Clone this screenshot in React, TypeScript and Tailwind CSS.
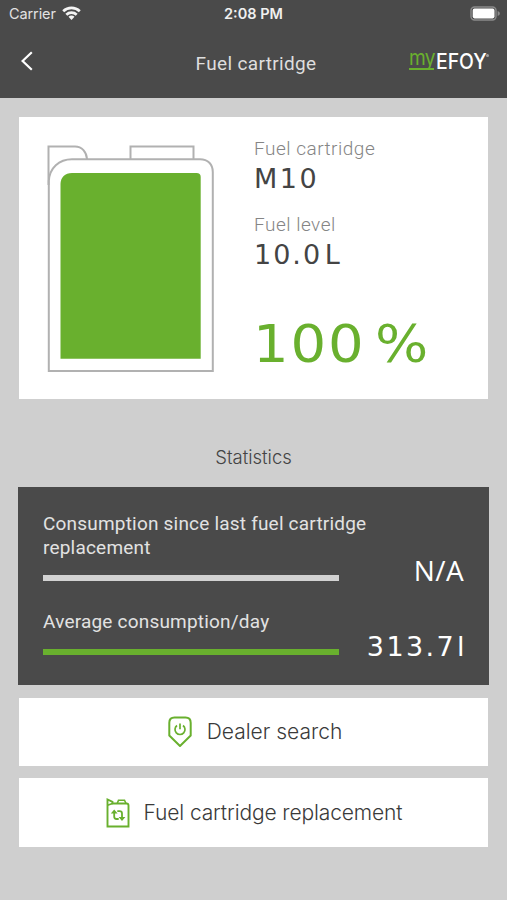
import { ReactNode } from "react";

interface Stat {
  label: string;
  value: string;
  barClass: string;
  textClass: string;
  valueClass: string;
}

const stats: Stat[] = [
  {
    label: "Consumption since last fuel cartridge replacement",
    value: "N/A",
    barClass: "bg-[#d2d2d2]",
    textClass: "h-[47px] mb-[16px]",
    valueClass: "mb-[-9px] font-['Open_Sans'] text-[28px] tracking-[0.4px]",
  },
  {
    label: "Average consumption/day",
    value: "313.7 l",
    barClass: "bg-[#69b02e]",
    textClass: "h-[24px] mb-[15px]",
    valueClass: "mb-[-12px] mr-[-3px] font-['DejaVu_Sans'] text-[27px] tracking-[2.4px] [word-spacing:-10px]",
  },
];

function WifiIcon() {
  return (
    <svg className="w-[19px] h-[15px]" viewBox="0 0 19 15" fill="none" stroke="#f4f4f4" strokeWidth="2.7">
      <path d="M1.2 5.2C5.9 .7 13.1 .7 17.8 5.2" />
      <path d="M4.3 8.7C7.2 5.9 11.8 5.9 14.7 8.7" />
      <path d="M6.5 10.7C8.3 9.2 10.7 9.2 12.5 10.7L9.5 13.9Z" fill="#f4f4f4" stroke="none" />
    </svg>
  );
}

function BatteryIcon() {
  return (
    <svg className="w-[31px] h-[15px]" viewBox="0 0 31 15" fill="none">
      <rect x="1" y="1" width="25" height="13" rx="3.5" stroke="#8b8b8b" strokeWidth="1.4" />
      <rect x="2.7" y="2.6" width="21.8" height="9.8" rx="1.8" fill="#fff" />
      <path d="M27.6 5C30.6 6.2 30.6 8.8 27.6 10Z" fill="#8b8b8b" />
    </svg>
  );
}

function Canister() {
  return (
    <svg className="w-[168px] h-[228px]" viewBox="0 0 168 228" fill="none" stroke="#b1b1b1" strokeWidth="2">
      <path d="M1.5 40V1.5H28C35 1.5 39.5 7 40 14" />
      <path d="M83.5 14V1.5H146.5V14" />
      <path d="M1.8 226V36C2.5 23 12 14.2 25 14.2H153C161 14.2 165.8 19.5 165.8 27V226Z" />
      <path d="M13.5 213.7V39C13.5 32.5 18 28 25 28H149.5C152.3 28 153.7 29.6 153.7 32V213.7Z" fill="#69b02e" stroke="none" />
    </svg>
  );
}

function DealerIcon() {
  return (
    <svg className="w-[24px] h-[32px]" viewBox="0 0 24 32" fill="none" stroke="#69b02e" strokeWidth="2">
      <path d="M6.5 1.5H17.5Q22.7 1.5 22.7 6.8V19.5L12 30L1.3 19.5V6.8Q1.3 1.5 6.5 1.5Z" strokeLinejoin="round" />
      <path d="M9 9.5A5 5 0 1 0 15 9.5M12 7.4V13.3" strokeWidth="1.7" />
    </svg>
  );
}

function ReplaceIcon() {
  return (
    <svg className="w-[24px] h-[30px]" viewBox="0 0 24 30" fill="none" stroke="#69b02e" strokeWidth="1.9">
      <path d="M1.5 28.5V1.5L6.5 3.8V5.5H20.5Q22.5 5.5 22.5 7.5V28.5Z" />
      <path d="M1.5 7.3L6.5 5.5M11.2 5.5L12.5 2.2H18.5L20 5.5" strokeWidth="1.6" />
      <path d="M8.2 13.5V18.5Q8.2 21 10.5 21H12.7M11.3 13.2H13.5Q16 13.2 16 15.5V20.5" strokeWidth="1.8" />
      <path d="M4.8 15.5L8.2 11.5L11.6 15.5ZM12.6 19L16 23L19.4 19Z" fill="#69b02e" stroke="none" />
    </svg>
  );
}

function ActionButton({ icon, children, className }: { icon: ReactNode; children: ReactNode; className: string }) {
  return (
    <button
      className={`flex w-full items-center justify-center bg-white font-[Inter] text-[21px] font-light text-[#3a3a3a] ${className}`}
    >
      {icon}
      <span className="whitespace-nowrap">{children}</span>
    </button>
  );
}

export default function App() {
  return (
    <div className="flex h-[900px] w-[507px] flex-col overflow-hidden bg-[#cfcfcf] font-[Roboto,sans-serif]">
      <header className="h-[98px] shrink-0 bg-[#4a4a4a] text-[#f0f0f0]">
        {/* Status bar */}
        <div className="grid h-[27px] grid-cols-3 items-center pl-[9px] pr-[6px] font-[Inter]">
          <div className="flex items-center gap-[6px]">
            <span className="text-[14.5px] tracking-[-0.1px] text-[#e2e2e2]">Carrier</span>
            <WifiIcon />
          </div>
          <span className="ml-[-3px] text-center text-[14.5px] font-semibold">2:08 PM</span>
          <div className="flex justify-end">
            <BatteryIcon />
          </div>
        </div>

        {/* Title bar */}
        <div className="grid h-[71px] grid-cols-3 items-center pl-[20px] pr-[18px]">
          <svg className="mb-[4px] h-[20px] w-[14px]" viewBox="0 0 14 20" fill="none" stroke="#fff" strokeWidth="2.2">
            <path d="M11.8 1.2L2.6 10L11.8 18.8" />
          </svg>
          <h1 className="ml-[3px] mt-[4px] whitespace-nowrap text-center text-[19px] tracking-[0.35px] text-[#dedede]">
            Fuel cartridge
          </h1>
          <div className="mb-[3px] flex h-[26px] items-center justify-end font-[Inter] text-[22px] leading-[26px]">
            <span className="relative h-[26px] w-[27px] text-[#69b02e]">
              <span className="mt-[-4px] block origin-left scale-x-[0.87] tracking-[-0.8px]">my</span>
              <span className="absolute bottom-[4px] left-0 h-[2px] w-[25px] bg-[#69b02e]" />
            </span>
            <span className="w-[50px] origin-left scale-x-[0.88] font-medium text-white">EFOY</span>
            <span className="mb-[12px] h-[3px] w-[3px] rounded-full bg-[#a0a0a0]" />
          </div>
        </div>
      </header>

      <main className="flex flex-col px-[19px] pt-[19px]">
        <section className="flex h-[282px] bg-white pl-[28px] pt-[28px]">
          <Canister />
          <div className="flex flex-col pl-[39px] text-[#444]">
            <span className="mt-[-8px] h-[24px] text-[19px] font-light leading-[24px] tracking-[0.5px] text-[#858585]">
              Fuel cartridge
            </span>
            <span className="h-[36px] font-['DejaVu_Sans'] text-[27px] leading-[36px] tracking-[2.5px]">M10</span>
            <span className="mt-[16px] h-[24px] text-[19px] font-light leading-[24px] tracking-[0.5px] text-[#858585]">
              Fuel level
            </span>
            <span className="h-[36px] font-['DejaVu_Sans'] text-[27px] leading-[36px] tracking-[2px] [word-spacing:-8px]">
              10.0 L
            </span>
            <span className="ml-[-1px] mt-[42px] h-[60px] origin-left scale-x-[1.1] whitespace-nowrap font-['DejaVu_Sans'] text-[51px] leading-[60px] tracking-[1.6px] text-[#69b02e] [word-spacing:-9px]">
              100 %
            </span>
          </div>
        </section>

        <h2 className="mt-[46px] h-[24px] text-center font-[Inter] text-[18.5px] font-light leading-[24px] text-[#444]">
          Statistics
        </h2>

        <section className="mx-[-1px] mt-[18px] flex h-[198px] flex-col bg-[#4a4a4a] pl-[25px] pr-[25px] pt-[25px]">
          {stats.map((s) => (
            <div key={s.label} className="mb-[29px] flex items-end justify-between">
              <div className="w-[340px] shrink-0 text-[19px] leading-[23.5px] tracking-[0.2px] text-[#e2e2e2]">
                <div className={s.textClass}>{s.label}</div>
                <div className={`h-[6px] w-[296px] ${s.barClass}`} />
              </div>
              <span className={`ml-[-30px] whitespace-nowrap leading-[40px] text-white ${s.valueClass}`}>
                {s.value}
              </span>
            </div>
          ))}
        </section>

        <div className="mt-[13px] flex flex-col gap-[12px]">
          <ActionButton icon={<DealerIcon />} className="h-[68px] gap-[15px] pl-[3px]">
            Dealer search
          </ActionButton>
          <ActionButton icon={<ReplaceIcon />} className="h-[69px] gap-[13px] pl-[2px] tracking-[-0.12px]">
            Fuel cartridge replacement
          </ActionButton>
        </div>
      </main>
    </div>
  );
}
